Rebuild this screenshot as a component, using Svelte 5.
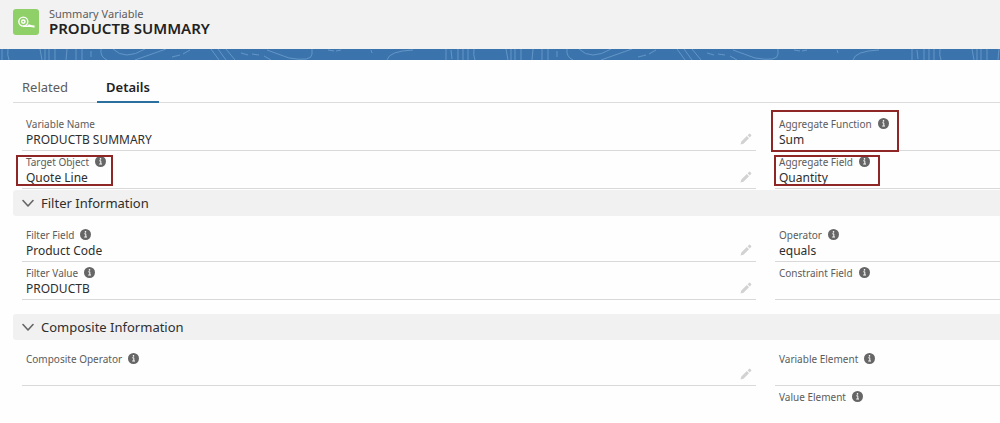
<script lang="ts">
  type Field = {
    label: string;
    value?: string;
    info?: boolean;
    edit?: boolean;
    mark?: string;
  };

  type Section = { title?: string; fields: Field[] };

  const tabs = ["Related", "Details"];
  let activeTab = $state("Details");

  let sections: (Section & { open: boolean })[] = $state([
    {
      open: true,
      fields: [
        { label: "Variable Name", value: "PRODUCTB SUMMARY", edit: true },
        { label: "Aggregate Function", value: "Sum", info: true, mark: "large" },
        { label: "Target Object", value: "Quote Line", info: true, edit: true, mark: "wide" },
        { label: "Aggregate Field", value: "Quantity", info: true, mark: "tight" },
      ],
    },
    {
      title: "Filter Information",
      open: true,
      fields: [
        { label: "Filter Field", value: "Product Code", info: true, edit: true },
        { label: "Operator", value: "equals", info: true },
        { label: "Filter Value", value: "PRODUCTB", info: true, edit: true },
        { label: "Constraint Field", info: true },
      ],
    },
    {
      title: "Composite Information",
      open: true,
      fields: [
        { label: "Composite Operator", info: true, edit: true },
        { label: "Variable Element", info: true },
        { label: "" },
        { label: "Value Element", info: true },
      ],
    },
  ]);
</script>

<header class="record-header">
  <svg class="record-icon" viewBox="0 0 26 26" aria-hidden="true">
    <rect width="26" height="26" rx="3" fill="#8fd069" />
    <circle cx="10.3" cy="12.6" r="4.500" fill="none" stroke="#fff" stroke-width="1.4" />
    <circle cx="10.3" cy="12.6" r="1.700" fill="none" stroke="#fff" stroke-width="1.500" />
    <path d="M10 18h7.500q2 0 4 0.800v-2.200q-2.600-0.200-5.500-1.400l-1.500 1.400h-4.500z" fill="#fff" />
  </svg>
  <div>
    <p class="record-type">Summary Variable</p>
    <h1>PRODUCTB SUMMARY</h1>
  </div>
</header>

<svg class="banner" aria-hidden="true">
  <defs>
    <pattern id="topo" width="466" height="11" patternUnits="userSpaceOnUse">
      <g fill="none" stroke="#6296c6" stroke-width="1">
        <path d="M2 0v11M8 0q-1 6 1 11M40 0l2 11M45 0v11M49 0v11M55 0v11M67 0l-1 11M76 0v11M82 0v11M91 2v6" />
        <path d="M101 0q-1 8 6 11M113 0q12 12 32 0M135 11l31-11M172 8l8-2M183 5l7-4" />
        <path d="M211 0l8 11M218 0l8 11M226 0l9 11M241 4l7 2M252 5l7 1M264 7l7 4" />
        <path d="M267 1l22 8q23 4 23-4v-5M328 1l6 1M336 2l5-1M371 1l1 3" />
        <path d="M387 11q2-9 26-10M446 0v11M451 1l1 9M458 0v11M463 0v11" />
      </g>
    </pattern>
  </defs>
  <rect width="100%" height="11" fill="url(#topo)" />
</svg>

<main>
  <div class="tabs" role="tablist">
    {#each tabs as tab}
      <button
        type="button"
        role="tab"
        aria-selected={tab === activeTab}
        class:active={tab === activeTab}
        onclick={() => (activeTab = tab)}
      >
        {tab}
      </button>
    {/each}
  </div>

  {#each sections as section}
    <section>
      {#if section.title}
        <h2>
          <button
            type="button"
            class="toggle"
            aria-expanded={section.open}
            onclick={() => (section.open = !section.open)}
          >
            <svg class="chevron" class:closed={!section.open} viewBox="0 0 12 12" aria-hidden="true">
              <path d="M1 3.500l5 5.500 5-5.500" fill="none" stroke="#666" stroke-width="1.600" stroke-linecap="round" stroke-linejoin="round" />
            </svg>
            {section.title}
          </button>
        </h2>
      {/if}

      {#if section.open}
        <div class="fields">
          {#each section.fields as field}
            {#if field.label}
              <div class="field">
                <div class="content {field.mark ?? ''}">
                  <div class="label">
                    {field.label}
                    {#if field.info}
                      <button type="button" class="info" aria-label={`Help: ${field.label}`}>
                        <svg viewBox="0 0 11 11" aria-hidden="true">
                          <circle cx="5.500" cy="5.500" r="5.500" fill="#666" />
                          <path d="M4.300 4.800h1.500v3M4.200 8h2.800" fill="none" stroke="#fff" stroke-width="1" />
                          <circle cx="5.500" cy="2.900" r="0.800" fill="#fff" />
                        </svg>
                      </button>
                    {/if}
                  </div>
                  <div class="value">{field.value ?? ""}</div>
                </div>
                {#if field.edit}
                  <button type="button" class="edit" aria-label={`Edit ${field.label}`}>
                    <svg viewBox="0 0 12 12" aria-hidden="true">
                      <path d="M0.500 11.500l0.800-3 5.500-5.500 2.200 2.200-5.500 5.500zM7.600 2.200l1.300-1.300q0.700-0.600 1.400 0l0.800 0.800q0.600 0.700 0 1.400l-1.300 1.300z" fill="#d2d2d2" />
                    </svg>
                  </button>
                {/if}
              </div>
            {:else}
              <div></div>
            {/if}
          {/each}
        </div>
      {/if}
    </section>
  {/each}
</main>

<style>
  :global(body) {
    margin: 0;
    background: #fefefe;
    color: #2e2e2e;
    font-family: "Noto Sans", "Open Sans", sans-serif;
    overflow-x: hidden;
  }

  button {
    padding: 0;
    border: none;
    background: none;
    color: inherit;
    font: inherit;
    cursor: pointer;
  }

  .record-header {
    display: flex;
    gap: 10px;
    height: 49px;
    padding: 8px 13px 0;
    box-sizing: border-box;
    background: #f2f2f2;
  }

  .record-icon {
    width: 26px;
    height: 26px;
    margin-top: 1px;
  }

  .record-type {
    margin: 0;
    font-size: 11px;
    line-height: 12px;
    color: #5c5c5c;
  }

  h1 {
    margin: 0;
    font-size: 15px;
    line-height: 16px;
    font-weight: 600;
    color: #222;
  }

  .banner {
    display: block;
    width: 100%;
    height: 11px;
    background: #3b73ac;
  }

  main {
    padding-left: 13px;
  }

  .tabs {
    display: flex;
    gap: 20px;
    height: 42px;
    margin-bottom: 2px;
    border-bottom: 1px solid #dcdcdc;
  }

  .tabs button {
    padding: 12px 9px 0;
    margin-bottom: -1px;
    border-bottom: 2px solid transparent;
    font-size: 13px;
    color: #5c5c5c;
  }

  .tabs button.active {
    border-bottom-color: #2b6f9f;
    font-weight: 600;
    color: #222;
  }

  h2 {
    margin: 0;
    padding-top: 1px;
    font-size: 13px;
    font-weight: 400;
  }

  .toggle {
    display: flex;
    align-items: center;
    gap: 7px;
    width: 100%;
    height: 26px;
    padding-left: 9px;
    border-radius: 3px 0 0 3px;
    background: #f1f1f1;
    text-align: left;
  }

  .chevron {
    width: 12px;
    height: 12px;
  }

  .chevron.closed {
    transform: rotate(-90deg);
  }

  .fields {
    display: grid;
    grid-template-columns: 734fr 225fr;
    column-gap: 19px;
    padding: 8px 0 0 9px;
  }

  section + section + section {
    padding-top: 13px;
  }

  .field {
    display: flex;
    justify-content: space-between;
    align-items: flex-end;
    height: 38px;
    padding: 0 4px;
    box-sizing: border-box;
    border-bottom: 1px solid #d9d9d9;
    white-space: nowrap;
  }

  .content {
    position: relative;
    height: 37px;
  }

  .label {
    display: flex;
    align-items: center;
    gap: 6px;
    height: 17px;
    padding-top: 2px;
    font-size: 10px;
    color: #5c5c5c;
  }

  .value {
    height: 16px;
    font-size: 12px;
    line-height: 16px;
  }

  .info,
  .info svg {
    display: block;
    width: 11px;
    height: 11px;
  }

  .edit,
  .edit svg {
    display: block;
    width: 12px;
    height: 12px;
  }

  .edit {
    margin-bottom: 5px;
  }

  /* red call-outs around the key fields */
  .large::after,
  .wide::after,
  .tight::after {
    content: "";
    position: absolute;
    border: 2px solid #8e2626;
    pointer-events: none;
  }

  .large::after {
    inset: -3px -10px -2px -8px;
  }

  .wide::after {
    inset: 4px -7px 2px -10px;
  }

  .tight::after {
    inset: 4px -10px 2px -5px;
  }
</style>
